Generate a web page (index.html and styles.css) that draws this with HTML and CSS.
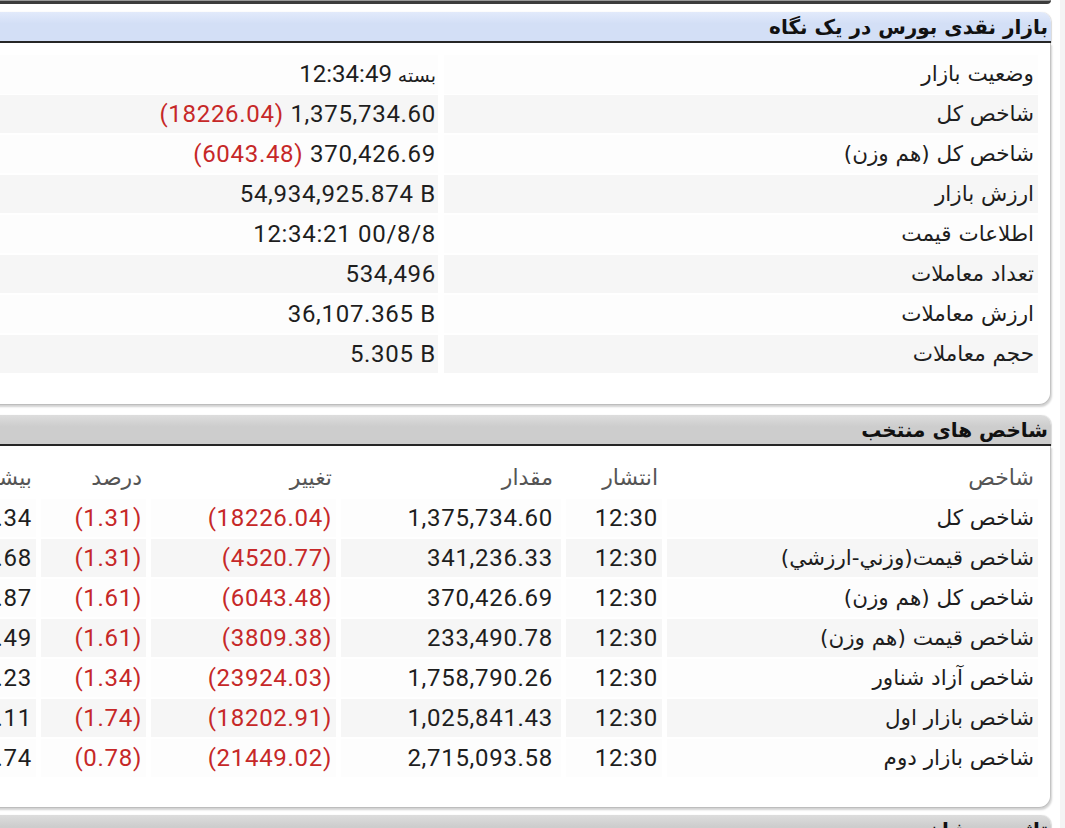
FILE: index.html
```html
<!DOCTYPE html>
<html lang="fa" dir="rtl">
<head>
<meta charset="utf-8">
<title>بازار نقدی بورس در یک نگاه</title>
<link rel="stylesheet" href="styles.css">
</head>
<body>
<div class="page">
  <div class="prev-panel"></div>

  <section class="panel panel-1">
    <h2 class="panel-head head-blue">بازار نقدی بورس در یک نگاه</h2>
    <div class="panel-body body-1">
      <div class="kv-row"><div class="kv-label">وضعیت بازار</div><div class="kv-value"><span class="fa">بسته</span> 12:34:49</div></div>
      <div class="kv-row alt"><div class="kv-label">شاخص کل</div><div class="kv-value"><span class="neg">(18226.04)</span> 1,375,734.60</div></div>
      <div class="kv-row"><div class="kv-label">شاخص کل (هم وزن)</div><div class="kv-value"><span class="neg">(6043.48)</span> 370,426.69</div></div>
      <div class="kv-row alt"><div class="kv-label">ارزش بازار</div><div class="kv-value">54,934,925.874 B</div></div>
      <div class="kv-row"><div class="kv-label">اطلاعات قیمت</div><div class="kv-value">12:34:21 00/8/8</div></div>
      <div class="kv-row alt"><div class="kv-label">تعداد معاملات</div><div class="kv-value">534,496</div></div>
      <div class="kv-row"><div class="kv-label">ارزش معاملات</div><div class="kv-value">36,107.365 B</div></div>
      <div class="kv-row alt"><div class="kv-label">حجم معاملات</div><div class="kv-value">5.305 B</div></div>
    </div>
  </section>

  <section class="panel panel-2">
    <h2 class="panel-head head-gray">شاخص های منتخب</h2>
    <div class="panel-body body-2">
      <div class="ix-row ix-head">
        <div>شاخص</div><div>انتشار</div><div class="amt">مقدار</div><div>تغییر</div><div>درصد</div><div>بیشترین</div><div>کمترین</div>
      </div>
      <div class="ix-row">
        <div class="nm">شاخص کل</div><div>12:30</div><div class="amt">1,375,734.60</div><div class="neg">(18226.04)</div><div class="neg">(1.31)</div><div>1,393,960.34</div><div>1,375,734.60</div>
      </div>
      <div class="ix-row alt">
        <div class="nm">شاخص قیمت(وزني-ارزشي)</div><div>12:30</div><div class="amt">341,236.33</div><div class="neg">(4520.77)</div><div class="neg">(1.31)</div><div>345,757.68</div><div>341,236.33</div>
      </div>
      <div class="ix-row">
        <div class="nm">شاخص کل (هم وزن)</div><div>12:30</div><div class="amt">370,426.69</div><div class="neg">(6043.48)</div><div class="neg">(1.61)</div><div>376,470.87</div><div>370,426.69</div>
      </div>
      <div class="ix-row alt">
        <div class="nm">شاخص قیمت (هم وزن)</div><div>12:30</div><div class="amt">233,490.78</div><div class="neg">(3809.38)</div><div class="neg">(1.61)</div><div>237,300.49</div><div>233,490.78</div>
      </div>
      <div class="ix-row">
        <div class="nm">شاخص آزاد شناور</div><div>12:30</div><div class="amt">1,758,790.26</div><div class="neg">(23924.03)</div><div class="neg">(1.34)</div><div>1,782,714.23</div><div>1,758,790.26</div>
      </div>
      <div class="ix-row alt">
        <div class="nm">شاخص بازار اول</div><div>12:30</div><div class="amt">1,025,841.43</div><div class="neg">(18202.91)</div><div class="neg">(1.74)</div><div>1,044,044.11</div><div>1,025,841.43</div>
      </div>
      <div class="ix-row">
        <div class="nm">شاخص بازار دوم</div><div>12:30</div><div class="amt">2,715,093.58</div><div class="neg">(21449.02)</div><div class="neg">(0.78)</div><div>2,736,542.74</div><div>2,715,093.58</div>
      </div>
    </div>
  </section>

  <section class="panel">
    <h2 class="panel-head head-gray">تاثیر در شاخص</h2>
  </section>
</div>
</body>
</html>
```

FILE: styles.css
```css
html, body {
  margin: 0;
  padding: 0;
  background: #ffffff;
  overflow: hidden;
}

body {
  font-family: Roboto, "DejaVu Sans", sans-serif;
  color: #1e1e1e;
}

.page {
  width: 1065px;
  height: 828px;
  overflow: hidden;
  box-sizing: border-box;
  padding-right: 14px;
  background: linear-gradient(to left, #f4f4f4 0, #f4f4f4 5px, #ffffff 5px);
}

.prev-panel {
  width: 1200px;
  height: 1px;
  background: #9a9a9a;
  border-bottom: 3px solid #3c3c3c;
  border-bottom-right-radius: 6px;
  margin-bottom: 8px;
}

.panel {
  width: 1200px;
}

.panel-1 {
  margin-bottom: 10px;
}

.panel-2 {
  margin-bottom: 7px;
}

.panel-head {
  margin: 0;
  height: 29px;
  line-height: 30px;
  padding-right: 3px;
  font-family: "DejaVu Sans", sans-serif;
  font-weight: bold;
  font-size: 20px;
  color: #111111;
  border-top-right-radius: 10px;
  border-bottom: 2px solid #262626;
  box-shadow: 1px 0 1px rgba(0, 0, 0, 0.15);
}

.head-blue {
  background: linear-gradient(#e2eafb, #d3dff6 40%);
}

.head-gray {
  background: linear-gradient(#dddddd, #cdcdcd 40%);
}

.panel-body {
  background: #ffffff;
  border-right: 1px solid #c4c4c4;
  border-bottom: 1px solid #bdbdbd;
  border-bottom-right-radius: 12px;
  box-shadow: 1px 2px 2px rgba(0, 0, 0, 0.18);
  padding-right: 12px;
  box-sizing: border-box;
  display: flex;
  flex-direction: column;
  gap: 2px;
}

.body-1 {
  height: 362px;
  padding-top: 12px;
}

.body-2 {
  height: 362px;
  padding-top: 13px;
}

.kv-row {
  display: grid;
  grid-template-columns: 594px 1fr;
  gap: 6px;
  height: 38px;
}

.kv-row > div {
  background: #fdfdfd;
  font-size: 24px;
  letter-spacing: 0.7px;
  line-height: 38px;
  padding-right: 4px;
  white-space: nowrap;
}

.kv-row.alt > div,
.ix-row.alt > div {
  background: #f6f6f6;
}

.kv-row > .kv-label {
  font-family: "DejaVu Sans", sans-serif;
  font-size: 21.5px;
  letter-spacing: 0;
}

.kv-row > .kv-value {
  direction: ltr;
  text-align: right;
  padding-right: 2px;
}

.fa {
  font-family: "DejaVu Sans", sans-serif;
  font-size: 19px;
  letter-spacing: 0;
}

.neg {
  color: #c62828;
}

.ix-row {
  display: grid;
  grid-template-columns: 371px 96px 220px 185px 105px 190px 190px;
  gap: 5px;
  height: 38px;
}

.ix-row > div {
  background: #fdfdfd;
  font-size: 24px;
  letter-spacing: 0.7px;
  line-height: 38px;
  padding-right: 4px;
  white-space: nowrap;
  direction: ltr;
  text-align: right;
}

.ix-row > div.amt {
  padding-right: 8px;
}

.ix-row > div.nm {
  direction: rtl;
  font-family: "DejaVu Sans", sans-serif;
  font-size: 21.5px;
  letter-spacing: 0;
}

.ix-head > div {
  background: #ffffff;
  direction: rtl;
  font-family: "DejaVu Sans", sans-serif;
  font-size: 22px;
  letter-spacing: 0;
  color: #555555;
}
```
